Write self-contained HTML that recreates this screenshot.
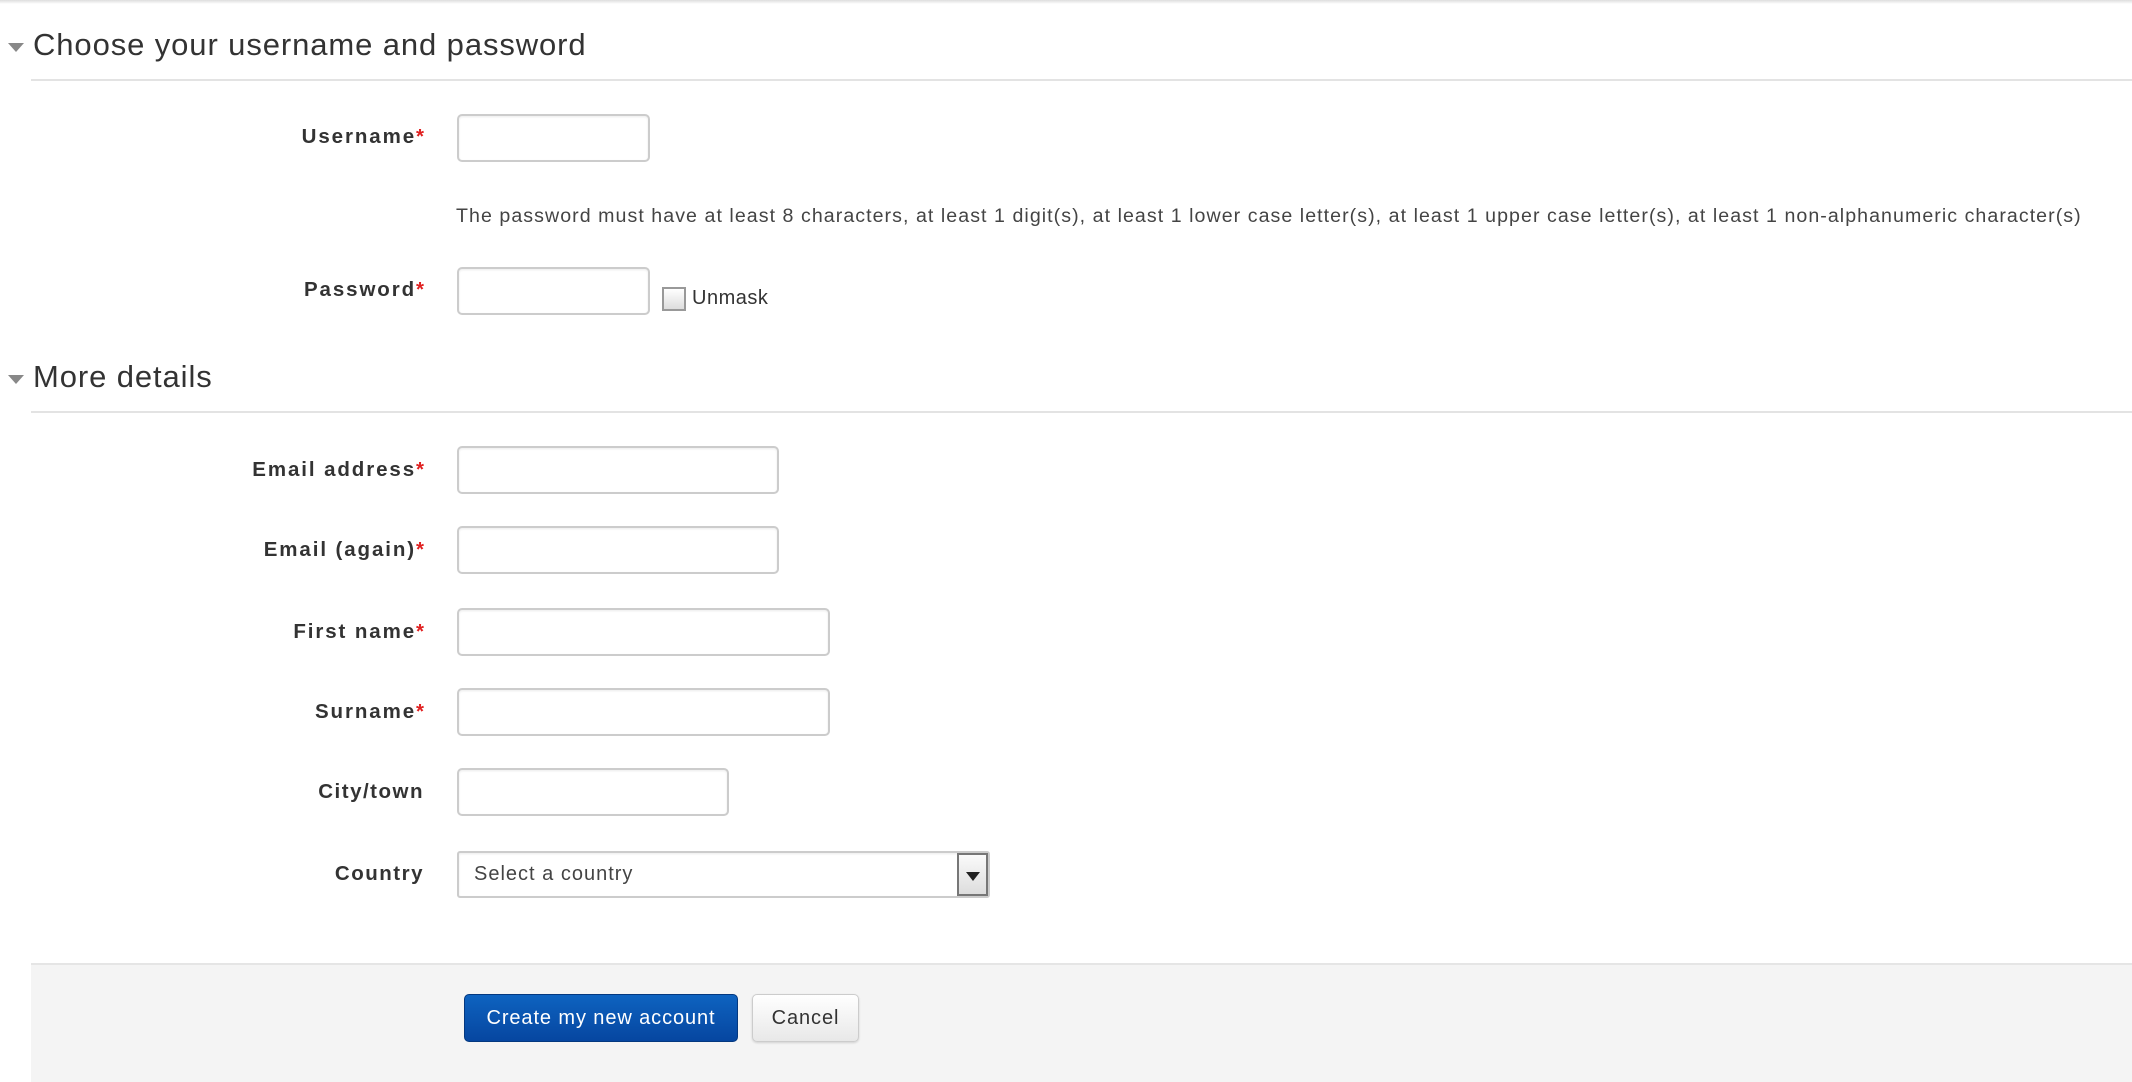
<!DOCTYPE html>
<html><head><meta charset="utf-8"><style>
*{margin:0;padding:0;box-sizing:border-box}
body{width:2132px;height:1082px;background:#fff;font-family:"Liberation Sans",Arial,sans-serif;position:relative;overflow:hidden;color:#333}
.topbar{position:absolute;left:0;top:0;width:2132px;height:4px;background:linear-gradient(#ddd,#fff)}
.a{position:absolute}
.h{font-size:31px;color:#333;left:33px;letter-spacing:0.9px}
.tri{left:8px;width:0;height:0;border-left:8px solid transparent;border-right:8px solid transparent;border-top:9px solid #888}
.line{left:31px;right:0;height:2px;background:#e3e3e3}
.lbl{font-weight:bold;font-size:20.5px;color:#333;right:1708px;text-align:right;white-space:nowrap;line-height:24px;letter-spacing:1.9px}
.lbl b{color:#e02020;letter-spacing:0}
.in{left:457px;height:48px;border:2px solid #ccc;border-radius:5px;background:#fff;box-shadow:inset 0 1px 2px rgba(0,0,0,.08)}
.help{left:456px;top:205px;font-size:19.6px;color:#444;white-space:nowrap;letter-spacing:1.05px}
.foot{left:31px;right:0;top:963px;bottom:0;background:#f4f4f4;border-top:2px solid #e5e5e5}
.btn{height:48px;border-radius:5px;font-size:20px;line-height:46px;text-align:center;letter-spacing:0.9px}
</style></head><body>
<div class="topbar"></div>
<div class="a tri" style="top:43px"></div>
<div class="a h" style="top:27px">Choose your username and password</div>
<div class="a line" style="top:79px"></div>

<div class="a lbl" style="top:125px">Username<b>*</b></div>
<div class="a in" style="top:114px;width:193px"></div>
<div class="a help">The password must have at least 8 characters, at least 1 digit(s), at least 1 lower case letter(s), at least 1 upper case letter(s), at least 1 non-alphanumeric character(s)</div>
<div class="a lbl" style="top:278px">Password<b>*</b></div>
<div class="a in" style="top:267px;width:193px"></div>
<div class="a" style="left:662px;top:287px;width:24px;height:24px;border:2px solid #999;background:linear-gradient(#fff,#ddd)"></div>
<div class="a" style="left:692px;top:287px;font-size:20px;color:#333;letter-spacing:0.5px">Unmask</div>

<div class="a tri" style="top:375px"></div>
<div class="a h" style="top:359px">More details</div>
<div class="a line" style="top:411px"></div>

<div class="a lbl" style="top:458px">Email address<b>*</b></div>
<div class="a in" style="top:446px;width:322px"></div>
<div class="a lbl" style="top:538px">Email (again)<b>*</b></div>
<div class="a in" style="top:526px;width:322px"></div>
<div class="a lbl" style="top:620px">First name<b>*</b></div>
<div class="a in" style="top:608px;width:373px"></div>
<div class="a lbl" style="top:700px">Surname<b>*</b></div>
<div class="a in" style="top:688px;width:373px"></div>
<div class="a lbl" style="top:780px;letter-spacing:1.5px">City/town</div>
<div class="a in" style="top:768px;width:272px"></div>
<div class="a lbl" style="top:862px;letter-spacing:1.5px">Country</div>
<div class="a in" style="top:851px;width:533px;height:47px;border-radius:3px;font-size:20px;color:#444;padding-left:15px;line-height:43px;letter-spacing:1px">Select a country
 <div class="a" style="right:0;top:0;width:31px;height:43px;background:linear-gradient(#fafafa,#ddd);border:2px solid #777"><div class="a" style="left:7px;top:17px;border-left:7px solid transparent;border-right:7px solid transparent;border-top:9px solid #222"></div></div>
</div>

<div class="a foot"></div>
<div class="a btn" style="left:464px;top:994px;width:274px;background:linear-gradient(#0e63c0,#0646a0);color:#fff;border:1px solid #04387f">Create my new account</div>
<div class="a btn" style="left:752px;top:994px;width:107px;background:linear-gradient(#fff,#e8e8e8);border:1px solid #ccc;color:#333;box-shadow:0 1px 2px rgba(0,0,0,.15)">Cancel</div>
</body></html>
